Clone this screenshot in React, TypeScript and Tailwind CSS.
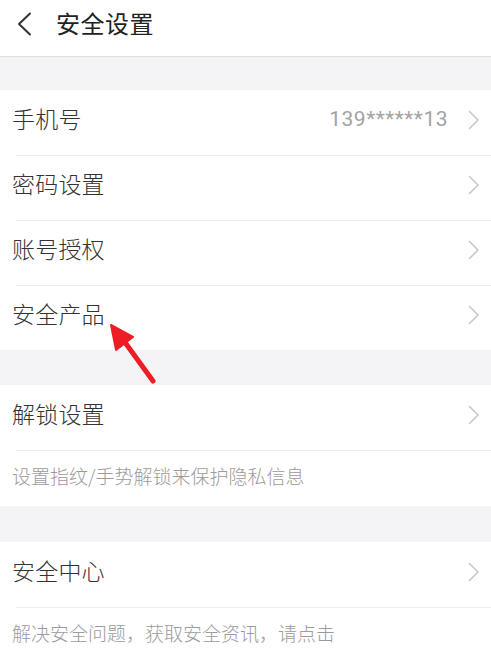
import React from 'react';

const font = { fontFamily: '"Noto Sans CJK SC", "Noto Sans", sans-serif' };

const Chevron: React.FC = () => (
    <svg width="12" height="20" viewBox="0 0 12 20" fill="none" className="shrink-0 -translate-y-[3px]">
        <path d="M1.5 1.5 L10 10 L1.5 18.5" stroke="#c7c7cc" strokeWidth="1.6" strokeLinejoin="round" strokeLinecap="round" />
    </svg>
);

const Row: React.FC<{ label: string; value?: string; divider?: boolean }> = ({ label, value, divider }) => (
    <div className="relative flex h-[65px] items-center pl-3 pr-[11px] bg-white">
        {divider && <div className="absolute top-0 left-4 right-0 h-px bg-[#ececee]" />}
        <span className="flex-1 text-[23px] leading-none font-light text-[#333333] tracking-[0.2px] -translate-y-[4px]">{label}</span>
        {value && (
            <span className="mr-[20px] text-[21px] leading-none text-[#a3a3a3] tracking-[0.5px] font-['Roboto',sans-serif] -translate-y-[3px]">{value}</span>
        )}
        <Chevron />
    </div>
);

const Note: React.FC<{ text: string; h: string }> = ({ text, h }) => (
    <div className={`relative flex items-center pl-3 bg-white ${h}`}>
        <div className="absolute top-0 left-4 right-0 h-px bg-[#ececee]" />
        <span className="text-[19px] leading-none font-light text-[#9b9b9b] -translate-y-[3px]">{text}</span>
    </div>
);

export default function App() {
    return (
        <div className="relative w-[491px] h-[660px] overflow-hidden bg-white" style={font}>
            <header className="flex h-[57px] items-center pb-[8px] border-b border-[#dedee2] bg-white">
                <svg width="16" height="24" viewBox="0 0 16 24" fill="none" className="ml-[16px]">
                    <path d="M14 1.5 L3 12 L14 22.5" stroke="#333333" strokeWidth="2" strokeLinejoin="round" strokeLinecap="round" />
                </svg>
                <h1 className="ml-[24px] text-[24px] leading-none text-[#222222] tracking-[0.5px] -mt-[2px]">安全设置</h1>
            </header>
            <div className="h-[33px] bg-[#f4f4f6]" />
            <Row label="手机号" value="139******13" />
            <Row label="密码设置" divider />
            <Row label="账号授权" divider />
            <Row label="安全产品" divider />
            <div className="h-[35px] bg-[#f4f4f6]" />
            <Row label="解锁设置" />
            <Note text="设置指纹/手势解锁来保护隐私信息" h="h-[56px]" />
            <div className="h-[36px] bg-[#f4f4f6]" />
            <Row label="安全中心" />
            <Note text="解决安全问题，获取安全资讯，请点击" h="h-[56px]" />

            <svg className="absolute left-0 top-0 pointer-events-none" width="491" height="660" viewBox="0 0 491 660">
                <line x1="153" y1="381" x2="124" y2="341" stroke="#ee1c25" strokeWidth="5" strokeLinecap="round" />
                <polygon points="111,325 133,337 116,350" fill="#ee1c25" stroke="#ee1c25" strokeWidth="2" strokeLinejoin="round" />
            </svg>
        </div>
    );
}
